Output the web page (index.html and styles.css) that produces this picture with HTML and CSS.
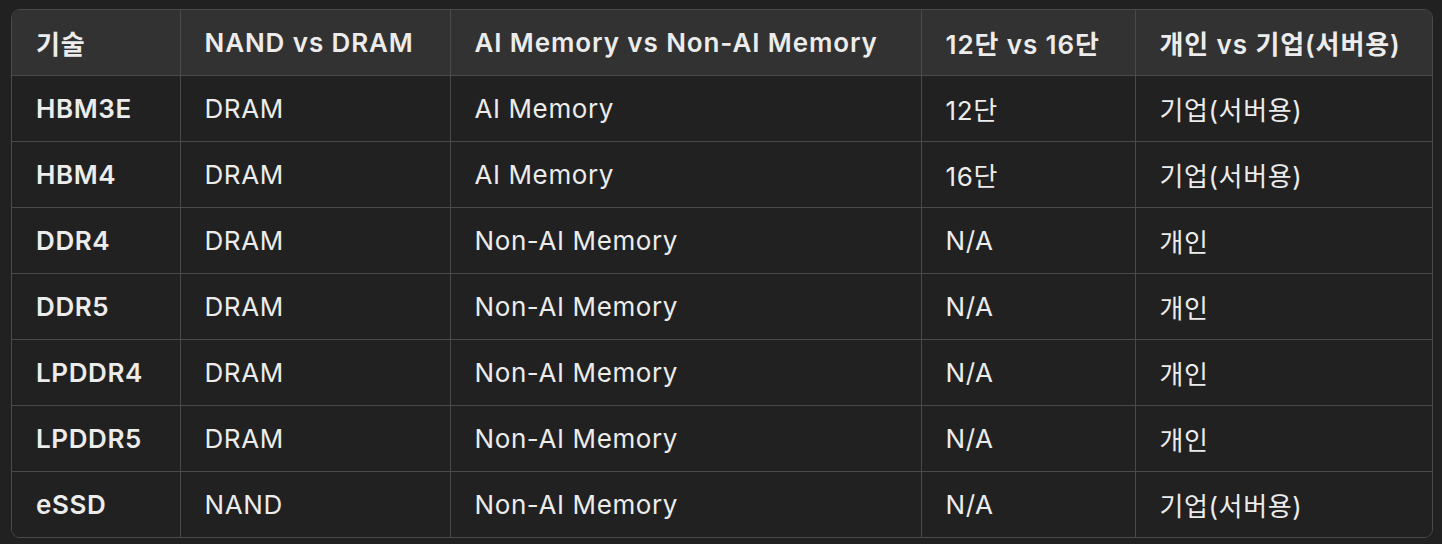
FILE: index.html
```html
<!DOCTYPE html>
<html lang="ko">
<head>
<meta charset="utf-8">
<link rel="stylesheet" href="styles.css">
</head>
<body>
<div class="wrap">
<table class="tbl">
<colgroup>
<col class="c1"><col class="c2"><col class="c3"><col class="c4"><col class="c5">
</colgroup>
<thead>
<tr><th>기술</th><th>NAND vs DRAM</th><th>AI Memory vs Non-AI Memory</th><th>12단 vs 16단</th><th>개인 vs 기업(서버용)</th></tr>
</thead>
<tbody>
<tr><td class="k">HBM3E</td><td>DRAM</td><td>AI Memory</td><td>12단</td><td>기업(서버용)</td></tr>
<tr><td class="k">HBM4</td><td>DRAM</td><td>AI Memory</td><td>16단</td><td>기업(서버용)</td></tr>
<tr><td class="k">DDR4</td><td>DRAM</td><td>Non-AI Memory</td><td>N/A</td><td>개인</td></tr>
<tr><td class="k">DDR5</td><td>DRAM</td><td>Non-AI Memory</td><td>N/A</td><td>개인</td></tr>
<tr><td class="k">LPDDR4</td><td>DRAM</td><td>Non-AI Memory</td><td>N/A</td><td>개인</td></tr>
<tr><td class="k">LPDDR5</td><td>DRAM</td><td>Non-AI Memory</td><td>N/A</td><td>개인</td></tr>
<tr><td class="k">eSSD</td><td>NAND</td><td>Non-AI Memory</td><td>N/A</td><td>기업(서버용)</td></tr>
</tbody>
</table>
</div>
</body>
</html>
```

FILE: styles.css
```css
html, body {
  margin: 0;
  background: #212121;
}
body {
  padding: 9px 9px 0 11px;
  font-family: Inter, "Noto Sans CJK KR", sans-serif;
  color: #ececec;
}
.wrap {
  width: 1422px;
  box-sizing: border-box;
  border: 1px solid #4a4a4a;
  border-radius: 9px;
  overflow: hidden;
}
.tbl {
  width: 100%;
  border-collapse: collapse;
  table-layout: fixed;
}
.c1 { width: 168px; }
.c2 { width: 270px; }
.c3 { width: 471px; }
.c4 { width: 214px; }
.c5 { width: auto; }
th, td {
  height: 66px;
  box-sizing: border-box;
  padding: 0 0 0 24px;
  text-align: left;
  font-size: 26px;
  letter-spacing: 0.6px;
  border-left: 1px solid #4a4a4a;
  border-top: 1px solid #4a4a4a;
  white-space: nowrap;
}
th:first-child, td:first-child { border-left: none; }
thead tr th { border-top: none; }
th {
  height: 65px;
  background: #323232;
  font-weight: 600;
  letter-spacing: 0.9px;
}
td { font-weight: 400; background: #212121; }
td.k { font-weight: 600; }
```
